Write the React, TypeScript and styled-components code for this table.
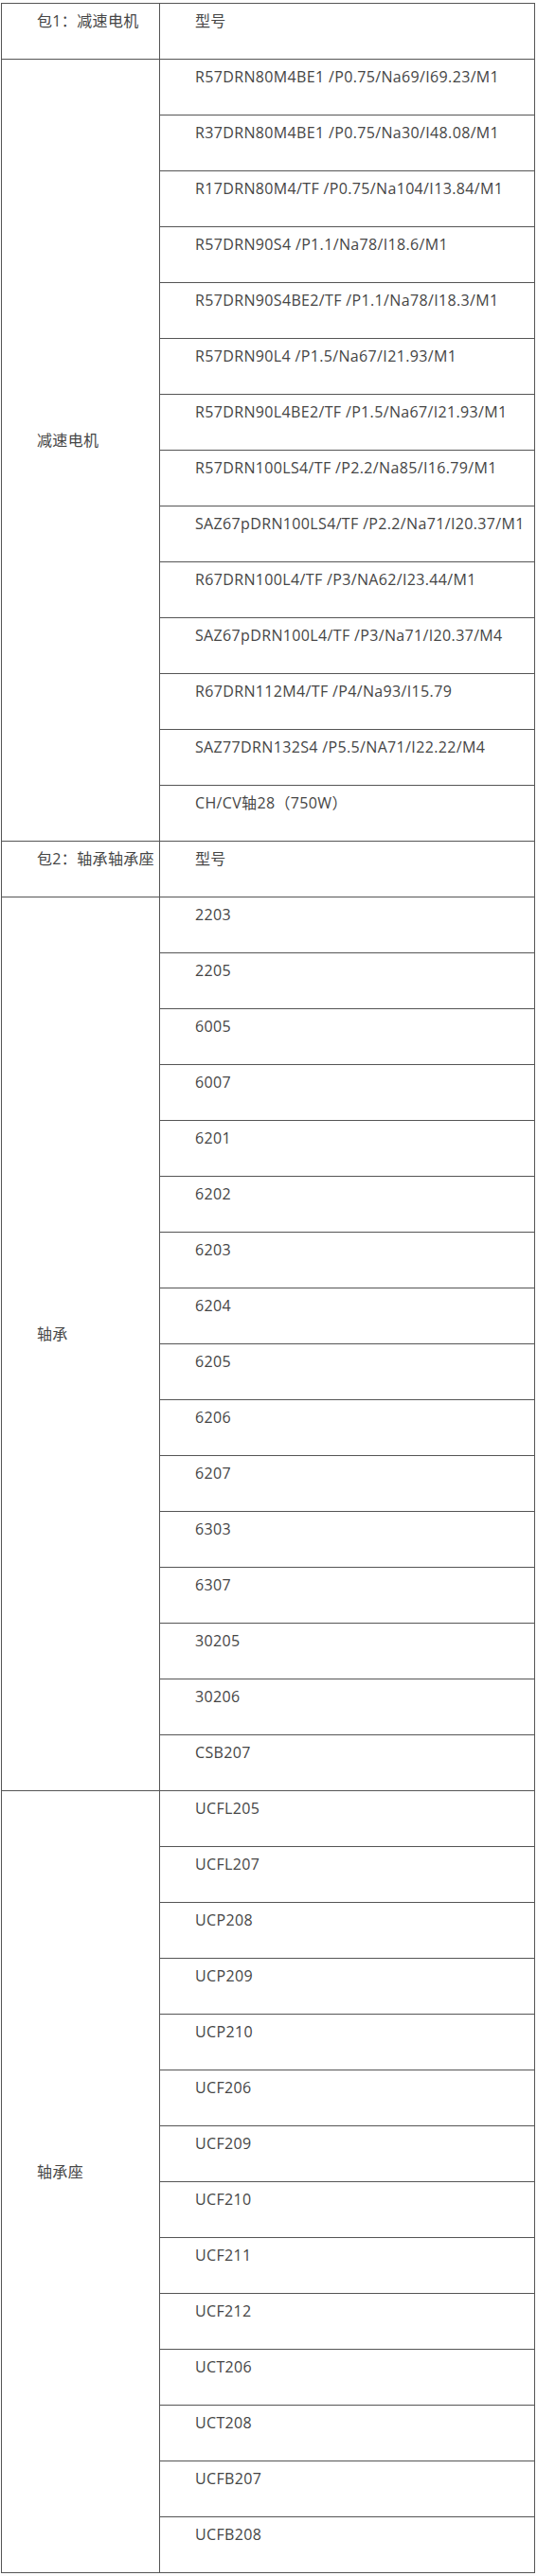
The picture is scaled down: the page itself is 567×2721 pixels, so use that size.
import styled, { createGlobalStyle } from "styled-components";

interface Group {
  label: string;
  items: string[];
}

interface Section {
  title: string;
  groups: Group[];
}

const sections: Section[] = [
  {
    title: "包1：减速电机",
    groups: [
      {
        label: "减速电机",
        items: [
          "R57DRN80M4BE1 /P0.75/Na69/I69.23/M1",
          "R37DRN80M4BE1 /P0.75/Na30/I48.08/M1",
          "R17DRN80M4/TF /P0.75/Na104/I13.84/M1",
          "R57DRN90S4 /P1.1/Na78/I18.6/M1",
          "R57DRN90S4BE2/TF /P1.1/Na78/I18.3/M1",
          "R57DRN90L4 /P1.5/Na67/I21.93/M1",
          "R57DRN90L4BE2/TF /P1.5/Na67/I21.93/M1",
          "R57DRN100LS4/TF /P2.2/Na85/I16.79/M1",
          "SAZ67pDRN100LS4/TF /P2.2/Na71/I20.37/M1",
          "R67DRN100L4/TF /P3/NA62/I23.44/M1",
          "SAZ67pDRN100L4/TF /P3/Na71/I20.37/M4",
          "R67DRN112M4/TF /P4/Na93/I15.79",
          "SAZ77DRN132S4 /P5.5/NA71/I22.22/M4",
          "CH/CV轴28（750W）",
        ],
      },
    ],
  },
  {
    title: "包2：轴承轴承座",
    groups: [
      {
        label: "轴承",
        items: [
          "2203",
          "2205",
          "6005",
          "6007",
          "6201",
          "6202",
          "6203",
          "6204",
          "6205",
          "6206",
          "6207",
          "6303",
          "6307",
          "30205",
          "30206",
          "CSB207",
        ],
      },
      {
        label: "轴承座",
        items: [
          "UCFL205",
          "UCFL207",
          "UCP208",
          "UCP209",
          "UCP210",
          "UCF206",
          "UCF209",
          "UCF210",
          "UCF211",
          "UCF212",
          "UCT206",
          "UCT208",
          "UCFB207",
          "UCFB208",
        ],
      },
    ],
  },
];

const GlobalStyle = createGlobalStyle`
  html, body {
    margin: 0;
    padding: 0;
    background: #ffffff;
  }
  body {
    font-family: "Open Sans", "Noto Sans CJK SC", sans-serif;
    font-size: 16px;
    color: #454545;
  }
`;

const Table = styled.table`
  margin: 3px 0 0 1px;
  width: 564px;
  table-layout: fixed;
  border-collapse: separate;
  border-spacing: 0;
  border-right: 1px solid #555555;
  border-bottom: 1px solid #555555;
`;

const LabelCol = styled.col`
  width: 167px;
`;

const ItemCol = styled.col`
  width: 396px;
`;

const Cell = styled.td`
  border-top: 1px solid #555555;
  border-left: 1px solid #555555;
  padding: 0 0 0 37px;
  vertical-align: middle;
  white-space: nowrap;
  overflow: hidden;
`;

const Line = styled.div`
  box-sizing: border-box;
  height: 58px;
  padding-top: 6px;
  line-height: 24px;
  letter-spacing: 0.35px;
`;

const App = (): JSX.Element => {
  return (
    <>
      <GlobalStyle />
      <Table>
        <colgroup>
          <LabelCol />
          <ItemCol />
        </colgroup>
        <tbody>
          {sections.map(section => [
            <tr key={section.title}>
              <Cell>
                <Line>{section.title}</Line>
              </Cell>
              <Cell>
                <Line>型号</Line>
              </Cell>
            </tr>,
            ...section.groups.flatMap(group =>
              group.items.map((item, i) => (
                <tr key={group.label + item}>
                  {i === 0 && (
                    <Cell rowSpan={group.items.length}>
                      <Line>{group.label}</Line>
                    </Cell>
                  )}
                  <Cell>
                    <Line>{item}</Line>
                  </Cell>
                </tr>
              ))
            ),
          ])}
        </tbody>
      </Table>
    </>
  );
};

export default App;
